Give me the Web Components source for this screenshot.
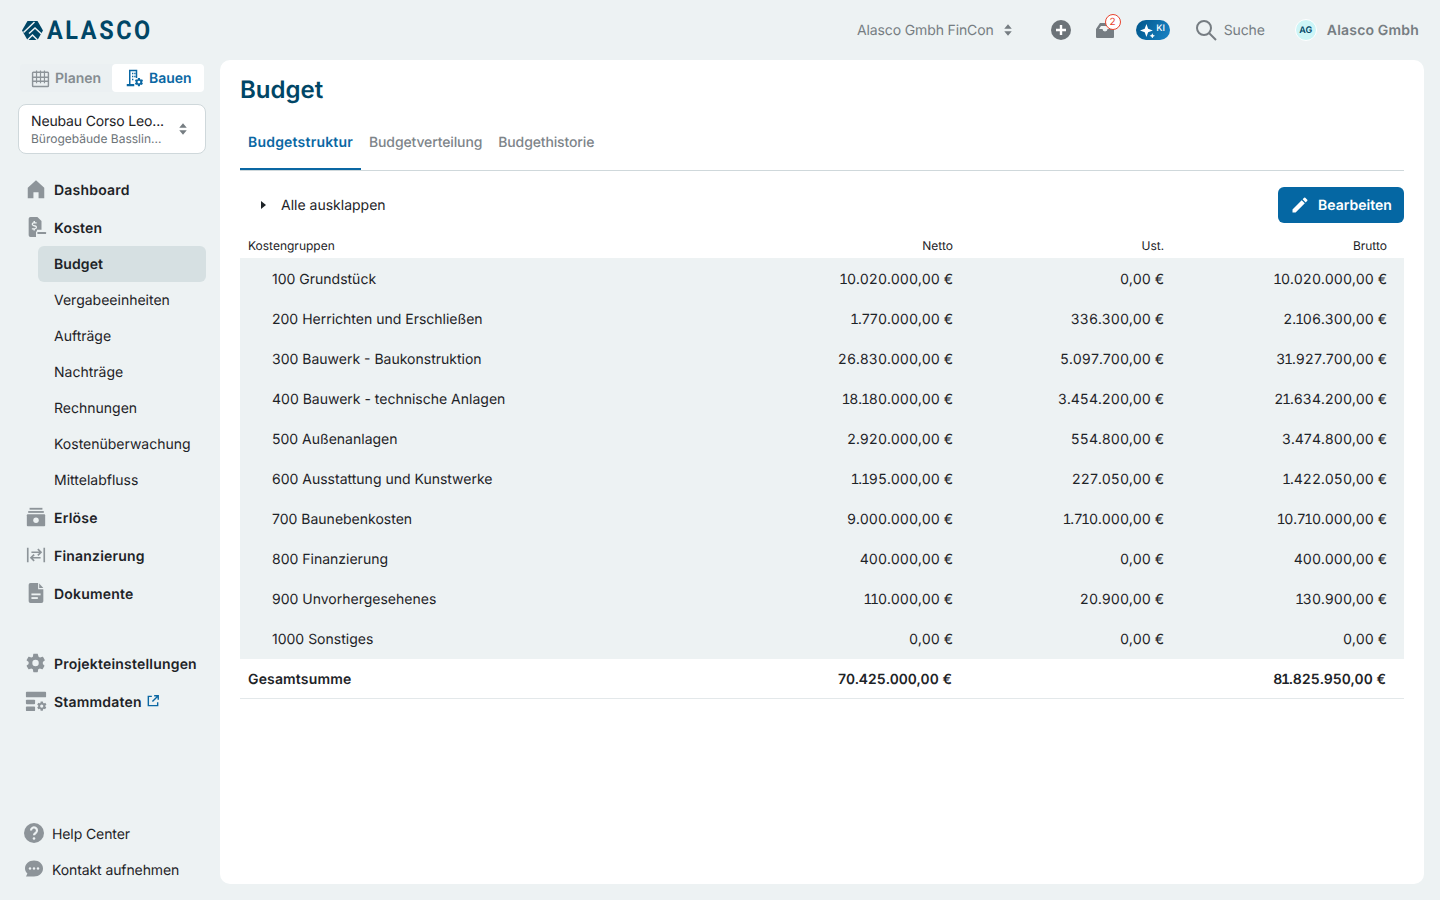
<!DOCTYPE html>
<html lang="de">
<head>
<meta charset="utf-8">
<title>Budget</title>
<style>
  html, body { margin: 0; height: 100%; }
  body { background: #edf2f3; font-family: Inter, "Noto Sans", sans-serif; color: #1d2327; overflow: hidden; text-rendering: geometricPrecision; }
  app-shell { height: 900px; }
</style>
</head>
<body>
<app-shell>
  <top-bar slot="top"></top-bar>
  <side-bar slot="side"></side-bar>
  <budget-page></budget-page>
</app-shell>

<script>
(function () {
  const GREY = '#8d9499';
  const GEAR = 'M19.400 13c.1-.3.1-.7.1-1s0-.7-.1-1l2.100-1.600c.2-.2.2-.4.1-.6l-2-3.500c-.1-.2-.4-.3-.6-.2l-2.500 1c-.5-.4-1.100-.7-1.700-1L14 2.400c0-.2-.2-.4-.5-.4h-4c-.2 0-.4.200-.5.400l-.4 2.700c-.6.300-1.100.6-1.700 1l-2.500-1c-.2-.1-.5 0-.6.200l-2 3.500c-.1.200-.1.500.1.600L4 11c0 .3-.1.700-.1 1s0 .7.1 1l-2.100 1.600c-.2.200-.2.400-.1.600l2 3.500c.1.200.4.300.6.200l2.500-1c.5.400 1.100.7 1.700 1l.4 2.700c0 .2.200.4.500.4h4c.2 0 .4-.2.500-.4l.4-2.700c.6-.3 1.100-.6 1.700-1l2.500 1c.2.100.5 0 .6-.2l2-3.500c.1-.2.1-.5-.1-.6zM11.500 15.500a3.500 3.500 0 1 1 0-7 3.500 3.500 0 0 1 0 7z';

  // icons, all on a 24 box
  const ICONS = {
    home: '<path d="M12 2.500 21 10.500V22h-6.200v-6.500H9.200V22H3V10.500z"/>',
    cost: '<path d="M6 1h7.500l4.500 4.500V15h-5v2h-1v6H6a2 2 0 0 1-2-2V3a2 2 0 0 1 2-2z"/><rect x="13.500" y="17.500" width="9.500" height="2.200" rx=".4"/><path transform="translate(.5 -3)" d="M7 16.300h3.400c.5 0 .8-.3.8-.8s-.3-.7-.8-.9l-1.700-.5c-1.200-.4-1.900-1.200-1.900-2.300 0-1.200.9-2 2-2.100V8.500h1.600v1.200h1.800v1.500H9c-.5 0-.8.300-.8.700s.3.7.8.8l1.700.5c1.200.400 1.900 1.100 1.900 2.200 0 1.200-.9 2.100-2.300 2.200v1.100H8.700v-1H7z" fill="#edf2f3"/>',
    revenue: '<rect x="5" y="2" width="14" height="2"/><rect x="3.500" y="5.500" width="17" height="2"/><path d="M3 9h18a1 1 0 0 1 1 1v11a1 1 0 0 1-1 1H3a1 1 0 0 1-1-1V10a1 1 0 0 1 1-1z"/><circle cx="12" cy="15.500" r="3" fill="#edf2f3"/>',
    finance: '<g fill="none" stroke="currentColor" stroke-width="1.800"><path d="M3 4v16M21 4v16"/><path d="M7 9h10M14 5.500 17.500 9 14 12.500"/><path d="M17 15H7M10 11.500 6.500 15 10 18.500"/></g>',
    doc: '<path d="M6 1h8.300v7H20v13a2 2 0 0 1-2 2H6a2 2 0 0 1-2-2V3a2 2 0 0 1 2-2z"/><path d="M15.500 1.500 20 6.500h-4.500z"/><rect x="7" y="12.500" width="10" height="2" fill="#edf2f3"/><rect x="7" y="16.500" width="7" height="2" fill="#edf2f3"/>',
    gear: `<path fill-rule="evenodd" d="${GEAR}"/>`,
    master: `<rect x="1" y="2" width="22" height="6" rx="1"/><rect x="1" y="10.500" width="10" height="5" rx="1"/><rect x="1" y="18" width="10" height="5" rx="1"/><g transform="translate(12.500 11.500) scale(.5)"><path fill-rule="evenodd" d="${GEAR}"/></g>`,
    help: '<circle cx="12" cy="12" r="10"/><path d="M9 9.500a3 3 0 1 1 4.600 2.500c-1 .6-1.600 1.100-1.600 2.300" fill="none" stroke="#edf2f3" stroke-width="2.200"/><circle cx="12" cy="17.500" r="1.300" fill="#edf2f3"/>',
    chat: '<path d="M12 3.500c5 0 9 3.500 9 8s-4 8-9 8H4l1.400-3C4 15.200 3 13.500 3 11.500c0-4.500 4-8 9-8z"/><circle cx="8" cy="11.500" r="1.200" fill="#edf2f3"/><circle cx="12" cy="11.500" r="1.200" fill="#edf2f3"/><circle cx="16" cy="11.500" r="1.200" fill="#edf2f3"/>',
    external: '<g fill="none" stroke="currentColor" stroke-width="2.400"><path d="M10 4H4v16h16v-6"/><path d="M14 3h7v7M21 3 11 13"/></g>',
    plan: '<g fill="none" stroke="currentColor" stroke-width="1.800"><rect x="2" y="4" width="20" height="18" rx="1"/><path d="M2 10.500h20M2 15.500h20"/><path d="M7 2v16M12 2v16M17 2v16" stroke-width="1.500"/></g>',
    build: `<path fill-rule="evenodd" d="M4 1h11v11h-2V3H6v17h5v3H1v-3h3z"/><path d="M8 5h1.800v2H8zM11 5h1.800v2H11zM8 9h1.800v2H8zM11 9h1.800v2H11zM8 13h1.800v2H8z"/><g transform="translate(11 11) scale(.54)"><path fill-rule="evenodd" d="${GEAR}"/></g>`,
    pencil: '<path d="M3 17.250V21h3.750L17.800 9.940l-3.750-3.750L3 17.250zM20.700 7.040a1 1 0 0 0 0-1.410l-2.340-2.340a1 1 0 0 0-1.410 0l-1.830 1.830 3.750 3.750 1.830-1.830z"/>',
    updown: '<path d="M12 5l4.500 5.500h-9zM12 19l-4.500-5.500h9z"/>',
  };

  const svg = (name, size, color) =>
    `<svg width="${size}" height="${size}" viewBox="0 0 24 24" fill="currentColor" style="color:${color};display:block;flex:none" aria-hidden="true">${ICONS[name]}</svg>`;

  // the reference's Inter sets 1 and 7 tighter than our tabular figures
  const figures = (v) => v.replace(/[17]/g, (d) => `<span class="d${d}">${d}</span>`);

  class AppShell extends HTMLElement {
    constructor() {
      super();
      this.attachShadow({ mode: 'open' });
      this.shadowRoot.innerHTML = `
        <style>
          :host { display: grid; grid-template-columns: 220px 1204px 16px; grid-template-rows: 60px 824px; }
          .top { grid-column: 1 / 4; }
          .main { background: #fff; border-radius: 10px; min-width: 0; }
        </style>
        <div class="top"><slot name="top"></slot></div>
        <div><slot name="side"></slot></div>
        <div class="main"><slot></slot></div>`;
    }
  }

  class TopBar extends HTMLElement {
    constructor() {
      super();
      this.attachShadow({ mode: 'open' });
      this.shadowRoot.innerHTML = `
        <style>
          :host { display: flex; height: 60px; align-items: center; padding: 0 21px 0 22px; box-sizing: border-box; font-size: 14px; color: #767d82; }
          .logo { display: flex; align-items: center; gap: 4px; color: #004666; margin-top: 2px; }
          .logo svg { margin-top: -2px; }
          .word { font: 700 26px/1 "Roboto", Inter, sans-serif; letter-spacing: 2.900px; transform: scaleX(.9); transform-origin: left; color: #004666; }
          .right { margin-left: auto; display: flex; align-items: center; }
          .project { display: flex; align-items: center; gap: 4px; letter-spacing: -.13px; }
          .plus { margin-left: 33px; }
          .inbox { position: relative; margin-left: 25px; }
          .count { position: absolute; top: -7px; right: -7px; width: 16px; height: 16px; border: 1px solid #e8432e; box-sizing: border-box; border-radius: 50%; background: #fff; color: #e8432e; font-size: 10px; line-height: 14px; text-align: center; }
          .ai { margin-left: 22px; width: 34px; height: 20px; border-radius: 10px; background: linear-gradient(120deg, #00568a, #1a84c7); display: flex; align-items: center; justify-content: center; gap: 1px; color: #fff; font-size: 9px; font-weight: 500; }
          .search { margin-left: 24px; display: flex; align-items: center; gap: 6px; letter-spacing: -.1px; }
          .avatar { margin-left: 30px; width: 22px; height: 22px; border-radius: 50%; background: #cdf5f7; color: #004666; border: 1px solid #fff; box-sizing: border-box; font-size: 9px; font-weight: 600; display: flex; align-items: center; justify-content: center; }
          .user { margin-left: 10px; font-weight: 600; letter-spacing: .18px; }
        </style>
        <div class="logo">
          <svg width="21" height="21" viewBox="0 0 21 21" aria-hidden="true">
            <path d="M5.500 1h10l5.500 9.500L15.500 20h-10L0 10.500z" fill="#004666"/>
            <path d="M1.500 12.500 12.500 2M7 13.500l6-5.500 6.500 6M5.500 20l5-5 5 5" stroke="#edf2f3" stroke-width="1.500" fill="none"/>
          </svg>
          <span class="word">ALASCO</span>
        </div>
        <div class="right">
          <div class="project"><span>Alasco Gmbh FinCon</span>${svg('updown', 20, '#767d82')}</div>
          <svg class="plus" width="20" height="20" viewBox="0 0 20 20" aria-hidden="true">
            <circle cx="10" cy="10" r="10" fill="#6c7378"/>
            <path d="M10 5v10M5 10h10" stroke="#fff" stroke-width="2.400"/>
          </svg>
          <div class="inbox">
            <svg width="18" height="18" viewBox="0 0 18 18" style="display:block" aria-hidden="true">
              <path d="M4 2h10l4 6v8a1 1 0 0 1-1 1H1a1 1 0 0 1-1-1V8z" fill="#767d82"/>
              <path d="M3 8h3.500a2.500 2.500 0 0 0 5 0H15l-2-3H5z" fill="#edf2f3"/>
            </svg>
            <span class="count">2</span>
          </div>
          <div class="ai">
            <svg width="15" height="15" viewBox="0 0 14 14" aria-hidden="true"><path d="M6 1 7.600 5.400 12 7 7.600 8.600 6 13 4.400 8.600 0 7 4.400 5.400zM11.500 9.500l.8 1.700 1.700.8-1.700.8-.8 1.700-.8-1.700L9 12l1.700-.8z" fill="#fff"/></svg>
            <span style="margin-top:-4px">KI</span>
          </div>
          <div class="search">
            <svg width="24" height="24" viewBox="0 0 24 24" fill="none" stroke="#767d82" stroke-width="2" aria-hidden="true"><circle cx="10" cy="10" r="7"/><path d="m15 15 7 7"/></svg>
            <span>Suche</span>
          </div>
          <div class="avatar">AG</div>
          <div class="user">Alasco Gmbh</div>
        </div>`;
    }
  }

  class NavItem extends HTMLElement {
    constructor() {
      super();
      this.attachShadow({ mode: 'open' });
    }
    connectedCallback() {
      const icon = this.getAttribute('icon');
      const sub = this.hasAttribute('sub');
      const foot = this.hasAttribute('foot');
      this.shadowRoot.innerHTML = `
        <style>
          :host { display: block; }
          .row { display: flex; align-items: center; height: 38px; padding-left: 25px; gap: 7px; font-size: 14px; font-weight: 600; letter-spacing: .2px; color: #1d2327; box-sizing: border-box; }
          .row .label { padding-top: 2px; }
          .row.sub { height: 36px; margin-left: 38px; padding: 0 0 0 16px; margin-right: 14px; font-weight: 400; letter-spacing: 0; border-radius: 6px; }
          .row.sub .label { padding-top: 0; }
          .row.foot { height: 36px; padding-left: 22px; gap: 6px; font-weight: 400; letter-spacing: -.1px; }
          :host([active]) .row { background: #d6e0e2; font-weight: 600; letter-spacing: .1px; }
          .tail { display: flex; margin-left: -3px; }
        </style>
        <div class="row ${sub ? 'sub' : ''} ${foot ? 'foot' : ''}">
          ${icon ? svg(icon, foot ? 24 : 22, GREY) : ''}
          <span class="label"><slot></slot></span>
          ${this.hasAttribute('external') ? `<span class="tail">${svg('external', 14, '#0a67a3')}</span>` : ''}
        </div>`;
    }
  }

  class SideBar extends HTMLElement {
    constructor() {
      super();
      this.attachShadow({ mode: 'open' });
      this.shadowRoot.innerHTML = `
        <style>
          :host { display: flex; flex-direction: column; height: 824px; box-sizing: border-box; padding-top: 4px; }
          .mode { display: flex; margin: 0 16px 0 20px; height: 28px; font-size: 14px; font-weight: 600; background: #ebf0f2; border-radius: 4px; }
          .mode div { display: flex; align-items: center; gap: 5px; box-sizing: border-box; }
          .plan { width: 92px; padding-left: 11px; color: #858c91; }
          .build { flex: 1; background: #fff; border-radius: 4px; color: #0a67a3; padding-left: 14px; gap: 4px; }
          .picker { margin: 12px 14px 0 18px; height: 50px; box-sizing: border-box; border: 1px solid #cfd8db; border-radius: 8px; background: #fff; display: flex; align-items: center; padding: 0 12px; }
          .names { flex: 1; min-width: 0; }
          .name { font-size: 14px; line-height: 20px; color: #1d2327; letter-spacing: -.16px; }
          .desc { font-size: 12px; line-height: 14px; color: #6c7378; }
          nav { margin-top: 16px; }
          .gap { height: 32px; }
          .foot { margin-top: auto; margin-bottom: -3px; }
        </style>
        <div class="mode">
          <div class="plan">${svg('plan', 19, GREY)}Planen</div>
          <div class="build">${svg('build', 18, '#0a67a3')}Bauen</div>
        </div>
        <div class="picker">
          <div class="names">
            <div class="name">Neubau Corso Leo...</div>
            <div class="desc">Bürogebäude Basslin...</div>
          </div>
          ${svg('updown', 20, '#767d82')}
        </div>
        <nav>
          <nav-item icon="home">Dashboard</nav-item>
          <nav-item icon="cost">Kosten</nav-item>
          <nav-item sub active>Budget</nav-item>
          <nav-item sub>Vergabeeinheiten</nav-item>
          <nav-item sub>Aufträge</nav-item>
          <nav-item sub>Nachträge</nav-item>
          <nav-item sub>Rechnungen</nav-item>
          <nav-item sub>Kostenüberwachung</nav-item>
          <nav-item sub>Mittelabfluss</nav-item>
          <nav-item icon="revenue">Erlöse</nav-item>
          <nav-item icon="finance">Finanzierung</nav-item>
          <nav-item icon="doc">Dokumente</nav-item>
          <div class="gap"></div>
          <nav-item icon="gear">Projekteinstellungen</nav-item>
          <nav-item icon="master" external>Stammdaten</nav-item>
        </nav>
        <div class="foot">
          <nav-item foot icon="help">Help Center</nav-item>
          <nav-item foot icon="chat">Kontakt aufnehmen</nav-item>
        </div>`;
    }
  }

  class BudgetRow extends HTMLElement {
    constructor() {
      super();
      this.attachShadow({ mode: 'open' });
    }
    connectedCallback() {
      const vals = (this.getAttribute('values') || '').split('|');
      this.shadowRoot.innerHTML = `
        <style>
          :host { display: grid; grid-template-columns: 1fr 211px 211px 223px; height: 40px; align-items: center; padding: 2px 17px 0 8px; font-size: 14px; color: #1d2327; background: #edf2f3; box-sizing: border-box; }
          :host([head]) { height: 24px; font-size: 12px; background: none; align-items: start; padding-top: 4px; }
          :host([last]) { height: 41px; padding-bottom: 1px; }
          :host([total]) { height: 40px; background: #fff; font-weight: 600; border-bottom: 1px solid #e3e8ea; }
          .name { padding-left: 24px; }
          :host([head]) .name, :host([total]) .name { padding-left: 0; }
          :host([total]) .name { letter-spacing: .15px; }
          :host([total]) .num { margin-right: 1px; }
          .num { text-align: right; font-variant-numeric: tabular-nums; }
          .d1 { margin: 0 -1.200px; }
          .d7 { margin: 0 -.5px; }
        </style>
        <div class="name"><slot></slot></div>
        ${vals.map(v => `<div class="num">${figures(v)}</div>`).join('')}`;
    }
  }

  const ROWS = [
    ['100 Grundstück', '10.020.000,00 €', '0,00 €', '10.020.000,00 €'],
    ['200 Herrichten und Erschließen', '1.770.000,00 €', '336.300,00 €', '2.106.300,00 €'],
    ['300 Bauwerk - Baukonstruktion', '26.830.000,00 €', '5.097.700,00 €', '31.927.700,00 €'],
    ['400 Bauwerk - technische Anlagen', '18.180.000,00 €', '3.454.200,00 €', '21.634.200,00 €'],
    ['500 Außenanlagen', '2.920.000,00 €', '554.800,00 €', '3.474.800,00 €'],
    ['600 Ausstattung und Kunstwerke', '1.195.000,00 €', '227.050,00 €', '1.422.050,00 €'],
    ['700 Baunebenkosten', '9.000.000,00 €', '1.710.000,00 €', '10.710.000,00 €'],
    ['800 Finanzierung', '400.000,00 €', '0,00 €', '400.000,00 €'],
    ['900 Unvorhergesehenes', '110.000,00 €', '20.900,00 €', '130.900,00 €'],
    ['1000 Sonstiges', '0,00 €', '0,00 €', '0,00 €'],
  ];

  class BudgetPage extends HTMLElement {
    constructor() {
      super();
      this.attachShadow({ mode: 'open' });
      this.shadowRoot.innerHTML = `
        <style>
          :host { display: block; padding: 0 20px; }
          h1 { margin: 0; padding-top: 14px; font-size: 24px; line-height: 32px; font-weight: 600; color: #004666; }
          .tabs { display: flex; margin-top: 14px; height: 50px; border-bottom: 1px solid #cfd8db; font-size: 14px; font-weight: 500; color: #7d8489; letter-spacing: -.13px; }
          .tabs div { padding: 0 8px; line-height: 46px; height: 50px; box-sizing: border-box; }
          .tabs .on { color: #0a67a3; border-bottom: 2px solid #0a67a3; font-weight: 600; letter-spacing: .2px; }
          .tools { display: flex; align-items: center; height: 36px; margin-top: 16px; font-size: 14px; }
          .tools .caret { width: 0; height: 0; border-left: 5px solid #1d2327; border-top: 4.500px solid transparent; border-bottom: 4.500px solid transparent; margin: 0 15px 0 21px; }
          .edit { margin-left: auto; width: 126px; height: 36px; border-radius: 6px; background: #0567a3; color: #fff; font-weight: 600; display: flex; align-items: center; gap: 8px; padding-left: 12px; box-sizing: border-box; }
          .head { margin-top: 11px; }
        </style>
        <h1>Budget</h1>
        <div class="tabs">
          <div class="on">Budgetstruktur</div>
          <div>Budgetverteilung</div>
          <div>Budgethistorie</div>
        </div>
        <div class="tools">
          <span class="caret"></span>
          <span class="label">Alle ausklappen</span>
          <div class="edit">${svg('pencil', 20, '#fff')}Bearbeiten</div>
        </div>
        <budget-row class="head" head values="Netto|Ust.|Brutto">Kostengruppen</budget-row>
        ${ROWS.map((r, i) => `<budget-row ${i === ROWS.length - 1 ? 'last' : ''} values="${r.slice(1).join('|')}">${r[0]}</budget-row>`).join('')}
        <budget-row total values="70.425.000,00 €||81.825.950,00 €">Gesamtsumme</budget-row>`;
    }
  }

  customElements.define('app-shell', AppShell);
  customElements.define('top-bar', TopBar);
  customElements.define('nav-item', NavItem);
  customElements.define('side-bar', SideBar);
  customElements.define('budget-row', BudgetRow);
  customElements.define('budget-page', BudgetPage);
})();
</script>
</body>
</html>
